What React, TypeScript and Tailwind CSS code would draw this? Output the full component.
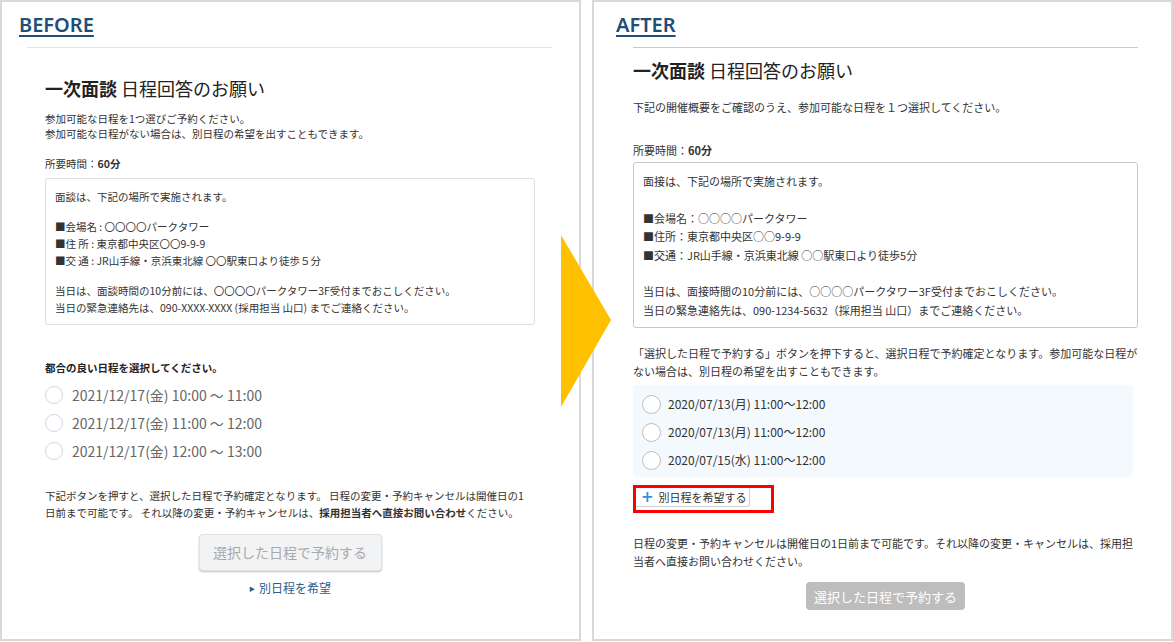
import React from "react";

const beforeSlots = [
  "2021/12/17(金) 10:00 ～ 11:00",
  "2021/12/17(金) 11:00 ～ 12:00",
  "2021/12/17(金) 12:00 ～ 13:00",
];

const afterSlots = [
  "2020/07/13(月) 11:00～12:00",
  "2020/07/13(月) 11:00～12:00",
  "2020/07/15(水) 11:00～12:00",
];

const PanelLabel: React.FC<{ label: string }> = ({ label }) => (
  <div className="font-['Noto_Sans',sans-serif] text-[20px] font-semibold leading-[26px] text-[#1f4e79] underline decoration-[2px] underline-offset-[3px]">
    {label}
  </div>
);

const Title: React.FC = () => (
  <h1 className="text-[18px] leading-[24px] text-[#222]">
    <span className="font-bold">一次面談</span> 日程回答のお願い
  </h1>
);

const BeforePanel: React.FC = () => (
  <section className="h-[641px] w-[581px] shrink-0 border-2 border-[#d9d9d9] bg-white">
    {/* Label */}
    <div className="pl-[17px] pt-[10px]">
      <PanelLabel label="BEFORE" />
    </div>
    <div className="ml-[25px] mt-[9px] h-px w-[525px] bg-[#e3e3e3]" />

    <div className="w-[533px] pl-[43px] text-[10.5px] text-[#333]">
      <div className="mt-[28px]">
        <Title />
      </div>
      <div className="mt-[11px] leading-[15px]">
        <p>参加可能な日程を1つ選びご予約ください。</p>
        <p>参加可能な日程がない場合は、別日程の希望を出すこともできます。</p>
      </div>
      <p className="mt-[15px] leading-[15px]">
        所要時間：<span className="font-bold">60分</span>
      </p>

      {/* Venue box */}
      <div className="mt-[7px] rounded-[3px] border border-[#dedede] pb-[8px] pl-[9px] pt-[9px] leading-[17px]">
        <p>面談は、下記の場所で実施されます。</p>
        <div className="mt-[13px]">
          <p>■会場名 : 〇〇〇〇パークタワー</p>
          <p>■住 所 : 東京都中央区〇〇9-9-9</p>
          <p>■交 通 : JR山手線・京浜東北線 〇〇駅東口より徒歩５分</p>
        </div>
        <div className="mt-[13px]">
          <p>当日は、面談時間の10分前には、〇〇〇〇パークタワー3F受付までおこしください。</p>
          <p>当日の緊急連絡先は、090-XXXX-XXXX (採用担当 山口) までご連絡ください。</p>
        </div>
      </div>

      <p className="mt-[35px] font-bold leading-[15px] text-[#222]">
        都合の良い日程を選択してください。
      </p>

      {/* Slots */}
      <div className="mt-[6px] flex flex-col">
        {beforeSlots.map((slot) => (
          <label key={slot} className="flex h-[28px] items-center gap-[9px]">
            <span className="h-[18px] w-[18px] rounded-full border border-[#cdd8e3] bg-white" />
            <span className="text-[14px] text-[#666]">{slot}</span>
          </label>
        ))}
      </div>

      <div className="mt-[22px] whitespace-nowrap leading-[17px]">
        <p>
          下記ボタンを押すと、選択した日程で予約確定となります。 日程の変更・予約キャンセルは開催日の1
          <br />
          日前まで可能です。 それ以降の変更・予約キャンセルは、
          <span className="font-bold">採用担当者へ直接お問い合わせ</span>ください。
        </p>
      </div>

      <div className="mt-[13px] flex flex-col items-center">
        <button className="h-[37px] w-[183px] rounded-[4px] border border-[#e2e2e2] bg-[#f2f3f4] text-[14px] text-[#a9a9a9] shadow-[0_1px_2px_rgba(0,0,0,0.25)]">
          選択した日程で予約する
        </button>
        <a className="mt-[8px] flex items-center gap-[4px] text-[12px] text-[#2d5d8b]">
          <span className="text-[6px]">▶</span>
          別日程を希望
        </a>
      </div>
    </div>
  </section>
);

const AfterPanel: React.FC = () => (
  <section className="h-[641px] w-[581px] shrink-0 border-2 border-[#d9d9d9] bg-white">
    <div className="pl-[22px] pt-[10px]">
      <PanelLabel label="AFTER" />
    </div>
    <div className="ml-[39px] mt-[9px] h-px w-[505px] bg-[#c9c9c9]" />

    <div className="w-[544px] pl-[39px] text-[11px] text-[#333]">
      <div className="mt-[10px]">
        <Title />
      </div>
      <p className="mt-[17px] leading-[16px]">
        下記の開催概要をご確認のうえ、参加可能な日程を１つ選択してください。
      </p>
      <p className="mt-[27px] leading-[16px]">
        所要時間：<span className="font-bold">60分</span>
      </p>

      {/* Venue box */}
      <div className="mt-[4px] rounded-[3px] border border-[#c8c8c8] pb-[8px] pl-[9px] pt-[9px] leading-[18.4px]">
        <p>面接は、下記の場所で実施されます。</p>
        <p>&nbsp;</p>
        <p>■会場名：○○○○パークタワー</p>
        <p>■住所：東京都中央区○○9-9-9</p>
        <p>■交通：JR山手線・京浜東北線 ○○駅東口より徒歩5分</p>
        <p>&nbsp;</p>
        <p>当日は、面接時間の10分前には、○○○○パークタワー3F受付までおこしください。</p>
        <p>当日の緊急連絡先は、090-1234-5632（採用担当 山口）までご連絡ください。</p>
      </div>

      <p className="mt-[16px] leading-[18px]">
        「選択した日程で予約する」ボタンを押下すると、選択日程で予約確定となります。参加可能な日程がない場合は、別日程の希望を出すこともできます。
      </p>

      {/* Slots */}
      <div className="mt-[5px] w-[500px] rounded-[4px] bg-[#f4f9fe] pb-[3px] pl-[9px] pt-[5px]">
        {afterSlots.map((slot, i) => (
          <label key={i} className="flex h-[28px] items-center gap-[7px]">
            <span className="h-[19px] w-[19px] rounded-full border border-[#bdbdbd] bg-white" />
            <span className="text-[12px] text-[#333]">{slot}</span>
          </label>
        ))}
      </div>

      {/* Highlighted secondary action */}
      <div className="mt-[8px] h-[28px] w-[141px] border-[3px] border-[#ff0000]">
        <button className="flex h-[19px] w-[114px] items-center gap-[5px] whitespace-nowrap rounded-br-[3px] border-b border-r border-[#d0d0d0] bg-white pl-[5px] text-[11px] text-[#333]">
          <span className="font-['DejaVu_Sans',sans-serif] text-[15px] font-bold leading-none text-[#3b8ed8]">+</span>
          別日程を希望する
        </button>
      </div>

      <p className="mt-[21px] leading-[18px]">
        日程の変更・予約キャンセルは開催日の1日前まで可能です。それ以降の変更・キャンセルは、採用担当者へ直接お問い合わせください。
      </p>

      <div className="mt-[12px] flex justify-center">
        <button className="h-[28px] w-[159px] rounded-[4px] bg-[#bdbdbd] text-[13px] text-white">
          選択した日程で予約する
        </button>
      </div>
    </div>
  </section>
);

export default function App() {
  return (
    <div className="relative flex h-[642px] w-[1173px] gap-[11px] overflow-hidden bg-white font-['Noto_Sans_CJK_JP',sans-serif]">
      <BeforePanel />
      <AfterPanel />

      {/* Transition arrow */}
      <svg
        className="absolute left-[561px] top-[235px]"
        width="50"
        height="172"
        viewBox="0 0 50 172"
      >
        <polygon points="0,0 50,85 0,172" fill="#ffc000" />
      </svg>
    </div>
  );
}
